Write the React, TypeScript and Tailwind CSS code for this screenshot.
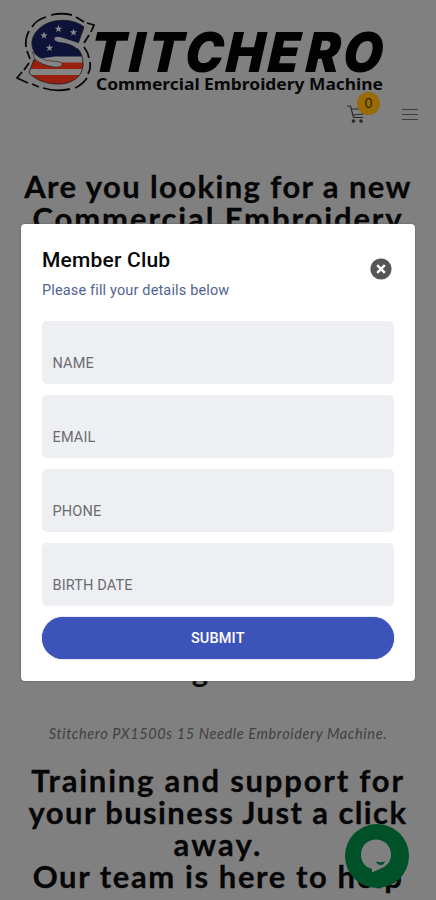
import React from "react";

const FIELDS = ["NAME", "EMAIL", "PHONE", "BIRTH DATE"];

const S_OUTLINE =
  "M84 27C76 20 60 18 48 23C36 28 31 38 32 45C33 52 37 57 42 59.500L34 59.500L29 73C36 80 46 84 58 84C73 84 83 76 83 64C83 55 80 50 75 46.500L78 44Z";

function Star({ x, y, s = 4 }: { x: number; y: number; s?: number }) {
  return (
    <path
      transform={`translate(${x} ${y}) scale(${s})`}
      d="M0-1 .24-.32.95-.31.38.12.59.81 0 .4-.59.81-.38.12-.95-.31-.24-.32Z"
      fill="#85868c"
    />
  );
}

function Logo() {
  return (
    <svg className="block h-[100px] w-full" viewBox="0 0 436 100" role="img" aria-label="Stitchero">
      <defs>
        <clipPath id="letter-s">
          <path d={S_OUTLINE} />
        </clipPath>
      </defs>
      <g clipPath="url(#letter-s)">
        <rect x="26" y="16" width="62" height="70" fill="#858585" />
        <path d="M26 16H88V56.500H55L36 59H26Z" fill="#0e1238" />
        <path d="M26 58L40 60L60 62.500H88V69H26Z" fill="#99200f" />
        <path d="M26 75H88V86H26Z" fill="#99200f" />
      </g>
      <path d={S_OUTLINE} fill="none" stroke="#181818" strokeWidth=".8" />
      <path
        d="M80 43.500L61 37.200Q54.500 36 54.300 39Q54.500 41.500 62 42.500Q71 43.500 77 48.500Z"
        fill="#808080"
      />
      <path
        d="M32.500 52Q39 58.500 47 60.500L57 61.500Q62.500 62 62 65Q61 67.500 54 67Q42 65 35 59.500Z"
        fill="#858585"
        stroke="#202020"
        strokeWidth=".6"
      />
      <Star x={44} y={35.5} />
      <Star x={58.5} y={29} />
      <Star x={73.5} y={32.5} />
      <Star x={49.5} y={48} />
      <g fill="none" stroke="#080808" strokeWidth="1.8">
        <path d="M51 15Q61 12.5 72 15M76 17L84 22M87 23L94 25L91 32M89 35L84 43M46 17Q36 20 32 27M29 31Q25 38 26 47M27 51L30 59" />
        <path d="M29 63L24 70M22 72L17 78L28 83M32 84L39 87M43 88Q56 92 70 89M75 88Q82 85 87 78M88 74Q91 69 90 62M89 58Q88 52 84 47" />
      </g>
      <text
        transform="translate(0 71.7) skewX(-4) scale(.93 1)"
        x="96 138 158 198 242 287 328 368"
        y="0"
        className="fill-[#020202] font-['Inter','Liberation_Sans',sans-serif] text-[55px] font-black italic"
      >
        TITCHERO
      </text>
      <text
        x="96"
        y="90"
        textLength="287"
        lengthAdjust="spacingAndGlyphs"
        className="fill-[#080808] font-['Noto_Sans',sans-serif] text-[16px] font-bold"
      >
        Commercial Embroidery Machine
      </text>
    </svg>
  );
}

function CartIcon() {
  return (
    <svg className="h-[20px] w-[20px]" viewBox="0 0 20 20" fill="none" stroke="#292929" strokeWidth="1.2">
      <path d="M0 2H3.500L6.500 13.500H16M4.500 5H18L16 10 6 11" />
      <circle cx="6.500" cy="17" r="1.2" fill="#292929" />
      <circle cx="14" cy="17" r="1.2" fill="#292929" />
    </svg>
  );
}

function Line({ children, className }: { children: React.ReactNode; className: string }) {
  return <span className={`block whitespace-nowrap ${className}`}>{children}</span>;
}

export default function App() {
  return (
    <div className="relative h-[900px] w-full overflow-hidden bg-[#808080] font-['Roboto',sans-serif]">
      <header className="h-[170px]">
        <Logo />
        <div className="flex items-center justify-end gap-[35px] pr-[18px] pt-[4px]">
          <div className="relative h-[20px] w-[20px]">
            <CartIcon />
            <span className="absolute -top-[12px] left-[10px] flex h-[23px] w-[23px] items-center justify-center rounded-full bg-[#986b05] font-['Lato',sans-serif] text-[13px] text-[#2d2005]">
              0
            </span>
          </div>
          <div className="flex w-[16px] flex-col gap-[4px]">
            <span className="h-px bg-[#3d3d3d]" />
            <span className="h-px bg-[#3d3d3d]" />
            <span className="h-px bg-[#3d3d3d]" />
          </div>
        </div>
      </header>

      <main className="text-center text-[#060606]">
        <h1 className="h-[484px] font-['Lato',sans-serif] text-[31px] font-bold leading-8 [-webkit-text-stroke:0.3px_#060606]">
          <Line className="tracking-[1.4px]">Are you looking for a new</Line>
          <Line className="tracking-[1.9px]">Commercial Embroidery</Line>
        </h1>
        <p className="h-8 pr-[36px] font-['Lato',sans-serif] text-[31px] font-bold leading-8">g</p>
        <p className="mt-[38px] whitespace-nowrap font-['Lato',sans-serif] text-[14.5px] italic leading-5 tracking-[0.62px] text-[#414141]">
          Stitchero PX1500s 15 Needle Embroidery Machine.
        </p>
        <h2 className="mt-[20px] font-['Lato',sans-serif] text-[31px] font-bold leading-8 [-webkit-text-stroke:0.3px_#060606]">
          <Line className="tracking-[1.8px]">Training and support for</Line>
          <Line className="tracking-[1.4px]">your business Just a click</Line>
          <Line className="tracking-[2.2px]">away.</Line>
          <Line className="tracking-[1.6px]">Our team is here to help</Line>
        </h2>
      </main>

      <button aria-label="Chat" className="absolute left-[345px] top-[824px] h-16 w-16 rounded-full bg-[#005028]">
        <svg className="h-16 w-16" viewBox="0 0 64 64">
          <path d="M31 15.5C22.500 15.500 16 22 16 30.500C16 38 20 43 27 45V48.500L39 43C43.500 40 46 36 46 30.500C46 22 39.500 15.500 31 15.500Z" fill="#808080" />
          <path d="M31 37.5Q35 39 40 37.5Q39 41 36 41Q32 41 31 37.5Z" fill="#005028" />
        </svg>
      </button>

      <section
        role="dialog"
        className="absolute left-[20.5px] top-[224px] flex h-[456.5px] w-[394.5px] flex-col rounded-[4px] bg-white px-[21.5px] pt-[23px] shadow-[0_0_2px_#555]"
      >
        <div className="flex h-[74px] justify-between">
          <div>
            <h2 className="text-[21px] font-medium leading-[27px] tracking-[0.2px] text-[#080808]">Member Club</h2>
            <p className="mt-[8px] text-[14.5px] leading-[18px] tracking-[0.15px] text-[#526491]">Please fill your details below</p>
          </div>
          <button aria-label="Close" className="mr-[2px] mt-[11px] h-[22px] w-[22px]">
            <svg viewBox="0 0 22 22" className="h-[22px] w-[22px]">
              <circle cx="11" cy="11" r="10.6" fill="#555" />
              <path d="m7.2 7.2 7.6 7.6m0-7.6-7.6 7.6" stroke="white" strokeWidth="2.4" />
            </svg>
          </button>
        </div>
        <div className="flex flex-col gap-[11px]">
          {FIELDS.map((label) => (
            <div key={label} className="flex h-[63px] items-end rounded-[5px] bg-[#eeeff3] px-[10.5px] pb-[11px] text-[14.5px] leading-[18px] tracking-[0.15px] text-[#6b6c70]">
              {label}
            </div>
          ))}
        </div>
        <button className="mt-[11px] h-[42px] rounded-full bg-[#3c54b9] pt-[2px] text-[14.5px] font-medium tracking-[0.15px] text-white shadow-[0_0_1px_#2444a8]">
          SUBMIT
        </button>
      </section>
    </div>
  );
}
